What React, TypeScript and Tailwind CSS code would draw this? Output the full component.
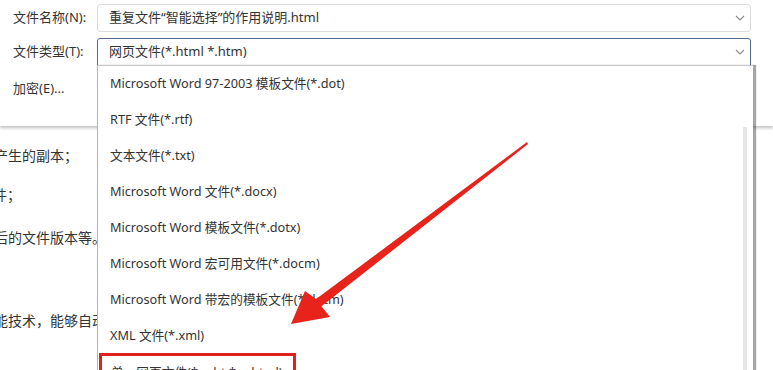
import React from "react";

const items = [
  "Microsoft Word 97-2003 模板文件(*.dot)",
  "RTF 文件(*.rtf)",
  "文本文件(*.txt)",
  "Microsoft Word 文件(*.docx)",
  "Microsoft Word 模板文件(*.dotx)",
  "Microsoft Word 宏可用文件(*.docm)",
  "Microsoft Word 带宏的模板文件(*.dotm)",
  "XML 文件(*.xml)",
];

function Chevron() {
  return (
    <svg width="10" height="6" viewBox="0 0 10 6" className="shrink-0">
      <path d="M1 1 L5 5 L9 1" fill="none" stroke="#8a8a8a" strokeWidth="1.1" />
    </svg>
  );
}

export default function App() {
  return (
    <div
      className="relative w-[773px] h-[370px] overflow-hidden bg-white text-[#333] text-[13px]"
      style={{ fontFamily: '"Noto Sans", "Noto Sans CJK SC", sans-serif' }}
    >
      {/* dialog top panel */}
      <div className="relative z-10 h-[126px] bg-white shadow-[0_2px_3px_rgba(0,0,0,0.25)] pl-[13px] pr-[22px] pt-[4px] flex flex-col">
        <div className="flex items-center h-[28px]">
          <div className="w-[84px] shrink-0">文件名称(N):</div>
          <div className="flex-1 h-[28px] border border-[#dcdcdc] rounded-[3px] flex items-center justify-between pl-[11px] pr-[5px]">
            <span>重复文件“智能选择”的作用说明.html</span>
            <Chevron />
          </div>
        </div>
        <div className="flex items-center h-[28px] mt-[6px]">
          <div className="w-[84px] shrink-0">文件类型(T):</div>
          <div className="flex-1 h-[28px] border border-[#4d6b8c] rounded-t-[3px] flex items-center justify-between pl-[11px] pr-[5px]">
            <span>网页文件(*.html *.htm)</span>
            <Chevron />
          </div>
        </div>
        <div className="mt-[12px] h-[22px] flex items-center">加密(E)...</div>
      </div>

      {/* document text behind */}
      <div className="text-[14px] text-[#333] leading-none" style={{ fontFamily: '"Noto Sans CJK SC", sans-serif' }}>
        <div className="ml-[-6px] mt-[22px] whitespace-nowrap">产生的副本；</div>
        <div className="ml-[-7px] mt-[25px] whitespace-nowrap">件；</div>
        <div className="ml-[-6px] mt-[29px] whitespace-nowrap">后的文件版本等。</div>
        <div className="ml-[-6px] mt-[69px] whitespace-nowrap">能技术，能够自动化地</div>
      </div>

      {/* dropdown list */}
      <div className="absolute z-20 left-[97px] top-[65px] w-[656px] h-[320px] bg-white border-l border-[#b4b4b4] border-t border-t-[#c8c8c8] shadow-[3px_0_1px_rgba(0,0,0,0.35)]">
        <div className="absolute right-[6px] top-[61px] w-[4px] h-[260px] bg-[#e6e6e6]" />
        <div className="flex flex-col pt-[0px]">
          {items.map((t) => (
            <div key={t} className="h-[36px] flex items-center pl-[12px] whitespace-nowrap text-[12.7px]">
              {t}
            </div>
          ))}
          <div className="ml-[1px] mt-[-1px] w-[197px] h-[40px] border-[3px] border-[#e0201b] flex items-start pl-[9px] pt-[7px] whitespace-nowrap text-[12.7px]">
            单一网页文件(*.mht;*.mhtml)
          </div>
        </div>
      </div>

      {/* red arrow */}
      <svg className="absolute z-30 left-0 top-0 pointer-events-none" width="773" height="370" viewBox="0 0 773 370">
        <polygon
          points="527,142 528,144 321.5,306.3 330,317 291,324 305,291 316.1,299.1"
          fill="#e8231b"
        />
      </svg>
    </div>
  );
}
